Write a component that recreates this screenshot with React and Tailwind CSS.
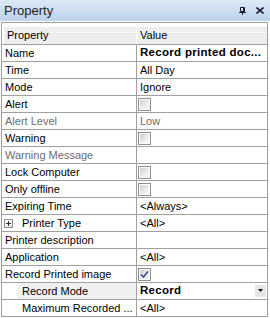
const rows = [
  { name: "Name", value: "Record printed doc...", bold: true },
  { name: "Time", value: "All Day" },
  { name: "Mode", value: "Ignore" },
  { name: "Alert", check: false },
  { name: "Alert Level", value: "Low", disabled: true },
  { name: "Warning", check: false },
  { name: "Warning Message", value: "", disabled: true },
  { name: "Lock Computer", check: false },
  { name: "Only offline", check: false },
  { name: "Expiring Time", value: "<Always>" },
  { name: "Printer Type", value: "<All>", expand: true },
  { name: "Printer description", value: "" },
  { name: "Application", value: "<All>" },
  { name: "Record Printed image", check: true },
  { name: "Record Mode", value: "Record", bold: true, child: true, selected: true, dropdown: true },
  { name: "Maximum Recorded ...", value: "<All>", child: true },
];

const CheckBox = ({ checked }) => (
  <div className="w-[13px] h-[13px] border border-[#8e8f8f] bg-white p-[1px]">
    <div className="w-full h-full bg-gradient-to-br from-[#cfcfcf] via-[#e8e8e8] to-[#fafafa] flex items-center justify-center">
      {checked && (
        <svg width="9" height="9" viewBox="0 0 9 9">
          <path d="M1 4.5 L3.5 7 L8 1.5" fill="none" stroke="#3d5290" strokeWidth="1.6" />
        </svg>
      )}
    </div>
  </div>
);

const PlusBox = () => (
  <div className="w-[9px] h-[9px] border border-[#919191] bg-gradient-to-br from-white to-[#e4e4e4] flex items-center justify-center">
    <svg width="5" height="5" viewBox="0 0 5 5">
      <path d="M0 2.5 H5 M2.5 0 V5" stroke="#333" strokeWidth="1" />
    </svg>
  </div>
);

const Row = ({ row }) => {
  const textColor = row.disabled ? "text-[#6d6d6d]" : "text-black";
  return (
    <div className="flex h-[17px] border-b border-[#a0a0a0]">
      <div className="w-[135px] border-r border-[#a0a0a0] flex shrink-0">
        {row.child ? (
          <div className={`flex-1 ml-[15px] pl-[5px] flex items-center ${row.selected ? "bg-[#f0f0f0]" : ""} ${textColor}`}>
            {row.name}
          </div>
        ) : row.expand ? (
          <div className={`flex-1 pl-[2px] flex items-center gap-[9px] ${textColor}`}>
            <PlusBox />
            <span>{row.name}</span>
          </div>
        ) : (
          <div className={`flex-1 pl-[3px] flex items-center whitespace-nowrap ${textColor}`}>{row.name}</div>
        )}
      </div>
      <div className={`flex-1 pl-[3px] pr-[1px] flex items-center ${textColor}`}>
        {row.check !== undefined ? (
          <div className="-ml-[2px]">
            <CheckBox checked={row.check} />
          </div>
        ) : (
          <span className={row.bold ? "font-bold text-[11.5px] tracking-[0.3px] whitespace-nowrap" : "whitespace-nowrap"}>
            {row.value}
          </span>
        )}
        {row.dropdown && (
          <div className="ml-auto w-[11px] h-[12px] bg-[#e6e6e6] flex items-center justify-center">
            <svg width="5" height="4" viewBox="0 0 5 4">
              <path d="M0 0 H5 L2.5 3 Z" fill="#1a1020" />
            </svg>
          </div>
        )}
      </div>
    </div>
  );
};

export default function App() {
  return (
    <div className="w-[270px] h-[318px] bg-white overflow-hidden text-[11px] leading-none" style={{ fontFamily: '"Liberation Sans", Arial, sans-serif' }}>
      <div className="h-[21px] bg-gradient-to-b from-[#dde9f6] to-[#bdd2eb] flex items-center pl-[4px] pr-[6px]">
        <span className="text-[13px] text-[#1e1e1e]">Property</span>
        <div className="ml-auto flex items-center gap-[10px]">
          <svg width="7" height="8" viewBox="0 0 7 8">
            <path d="M1.5 0.5 H5.5 V4.5 H1.5 Z M4.5 0.5 V4.5" fill="none" stroke="#1b1b36" strokeWidth="1" />
            <path d="M0 5.5 H7 M3.5 5.5 V8" stroke="#1b1b36" strokeWidth="1" />
          </svg>
          <svg width="8" height="7" viewBox="0 0 8 7">
            <path d="M0.5 0.5 L7.5 6.5 M7.5 0.5 L0.5 6.5" stroke="#1b1b36" strokeWidth="1.6" />
          </svg>
        </div>
      </div>
      <div className="mt-[1px] ml-[1px] w-[267px] border-l border-t border-r border-[#a0a0a0]">
        <div className="pt-[4px] border-b border-[#a0a0a0]">
          <div className="relative ml-[2px] h-[17px] bg-[#eeeeee] flex text-black">
            <div className="absolute left-0 right-0 top-[5px] border-t border-dotted border-white" />
            <div className="relative w-[133px] border-r border-white pl-[3px] flex items-center">Property</div>
            <div className="relative flex-1 pl-[3px] flex items-center">Value</div>
          </div>
        </div>
        {rows.map((row) => (
          <Row key={row.name} row={row} />
        ))}
      </div>
    </div>
  );
}
